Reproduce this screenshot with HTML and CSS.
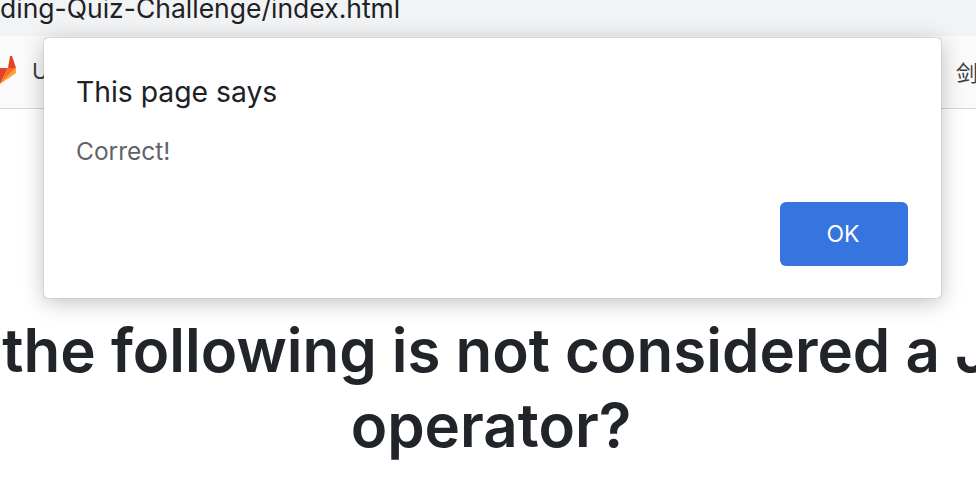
FILE: index.html
```html
<!DOCTYPE html>
<html lang="en">
<head>
    <meta charset="UTF-8" />
    <title>Coding Quiz Challenge</title>
    <link rel="stylesheet" href="styles.css">
</head>
<body>
    <!-- Browser chrome -->
    <div class="address-bar">
        <span class="url">ding-Quiz-Challenge/index.html</span>
    </div>
    <div class="bookmarks">
        <div class="bookmark">
            <svg class="fox" width="18" height="32" viewBox="0 0 18 32">
                <polygon points="0,13 8,13 0,29" fill="#e24329"/>
                <polygon points="8,13 16,13 0,29" fill="#fc6d26"/>
                <polygon points="8,13 10,1 12,1 16,13" fill="#e24329"/>
                <polygon points="16,13 0,29 16,18" fill="#fca326"/>
            </svg>
            <span class="bookmark-label">U</span>
        </div>
        <span class="bookmark-label bookmark-cjk">剑</span>
    </div>

    <!-- Quiz page -->
    <main class="quiz">
        <h1>
            <span class="line-one">Which of the following is not considered a JavaScript</span>
            <span class="line-two">operator?</span>
        </h1>
    </main>

    <!-- Alert dialog -->
    <div class="dialog">
        <div class="dialog-title">This page says</div>
        <div class="dialog-message">Correct!</div>
        <div class="dialog-actions">
            <button type="button" class="ok">OK</button>
        </div>
    </div>
</body>
</html>
```

FILE: styles.css
```css
/* Page frame */
html, body {
    height: 100%;
}

body {
    margin: 0;
    width: 976px;
    height: 498px;
    overflow: hidden;
    background-color: #fff;
    font-family: Inter, 'Liberation Sans', 'Noto Sans CJK SC', sans-serif;
    position: relative;
}

/* Browser chrome */
.address-bar {
    height: 36px;
    background-color: #f1f3f5;
    overflow: hidden;
}

.url {
    display: block;
    margin-top: -8px;
    font-size: 26.5px;
    line-height: 32px;
    color: #202124;
    white-space: nowrap;
}

.bookmarks {
    height: 73px;
    box-sizing: border-box;
    border-bottom: 1px solid #d5d5da;
    background-color: #fafafa;
    display: flex;
    align-items: center;
    justify-content: space-between;
    padding-bottom: 2px;
}

.bookmark {
    display: flex;
    align-items: center;
    gap: 14px;
}

.fox {
    display: block;
}

.bookmark-label {
    font-size: 22px;
    color: #3c4043;
}

.bookmark-cjk {
    margin-right: -2px;
    width: 22px;
    font-family: 'Noto Sans CJK SC', sans-serif;
}

/* Quiz page */
.quiz {
    display: flex;
    justify-content: center;
    padding-top: 204px;
}

h1 {
    margin: 0;
    flex: none;
    width: 1800px;
    text-align: center;
    font-size: 60px;
    line-height: 75px;
    font-weight: 600;
    color: #212529;
    white-space: nowrap;
}

.line-one {
    display: block;
    padding-left: 16px;
}

.line-two {
    display: block;
    padding-left: 6px;
}

/* Alert dialog */
.dialog {
    position: absolute;
    left: 44px;
    top: 38px;
    width: 897px;
    height: 260px;
    box-sizing: border-box;
    padding: 37px 33px 32px 32px;
    background-color: #fff;
    border-radius: 4px;
    box-shadow: 0 0 1px rgba(0, 0, 0, 0.6), 0 4px 22px rgba(0, 0, 0, 0.25);
    display: flex;
    flex-direction: column;
}

.dialog-title {
    font-size: 28.3px;
    line-height: 34px;
    color: #202124;
}

.dialog-message {
    margin-top: 27px;
    font-size: 24.5px;
    line-height: 30px;
    color: #5f6368;
}

.dialog-actions {
    margin-top: auto;
    display: flex;
    justify-content: flex-end;
}

.ok {
    width: 128px;
    height: 64px;
    padding: 0 2px 0 0;
    border: none;
    border-radius: 6px;
    background-color: #3674e0;
    color: #fff;
    font-family: inherit;
    font-size: 23px;
}
```
